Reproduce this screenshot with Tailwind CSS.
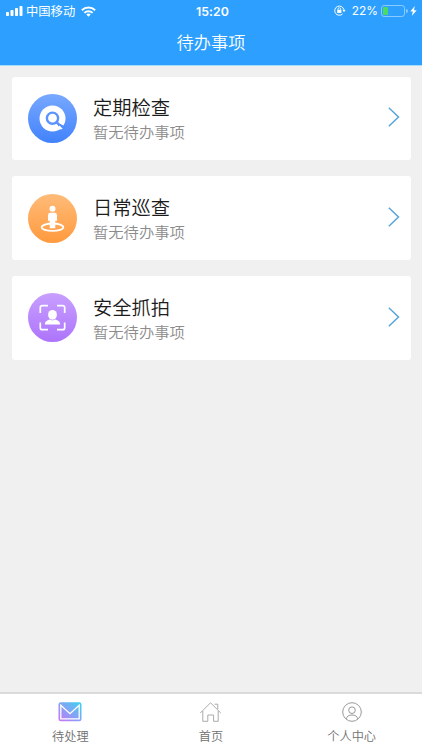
<!DOCTYPE html>
<html lang="zh-Hans">
<head>
    <meta charset="UTF-8">
    <meta name="viewport" content="width=device-width, initial-scale=1.0">
    <title>待办事项</title>
    <script src="https://cdn.jsdelivr.net/npm/@tailwindcss/browser@4"></script>
</head>
<body class="h-[750px] flex flex-col overflow-hidden bg-[#f0f0f0] font-['Inter','Noto_Sans_CJK_SC',sans-serif]">
    <!-- 顶部 -->
    <header class="h-[66px] shrink-0 bg-[#2c9fff] border-b border-[#a5dcfc] text-white">
        <div class="h-[22px] grid grid-cols-[1fr_auto_1fr] items-center pl-[6px] pr-[5px] text-[12.3px] leading-[21px]">
            <div class="flex items-center">
                <svg class="w-[17px] h-[10px]" viewBox="0 0 17 10" fill="currentColor">
                    <rect x="0" y="6" width="3" height="4" rx=".8"/>
                    <rect x="4.5" y="4" width="3" height="6" rx=".8"/>
                    <rect x="9" y="2" width="3" height="8" rx=".8"/>
                    <rect x="13.5" y="0" width="3" height="10" rx=".8"/>
                </svg>
                <span class="ml-[3px] pt-px">中国移动</span>
                <svg class="ml-[6px] w-[15px] h-[11px]" viewBox="0 0 15 11" fill="none" stroke="currentColor" stroke-width="2">
                    <path d="M.9 4.2a9.4 9.4 0 0 1 13.2 0M3.4 6.9a5.8 5.8 0 0 1 8.2 0"/>
                    <path d="M7.5 10.8 5.3 8.6a3.1 3.1 0 0 1 4.4 0z" fill="currentColor" stroke="none"/>
                </svg>
            </div>
            <span class="pl-[2px] text-[12.3px] font-semibold tracking-[0.1px]">15:20</span>
            <div class="flex items-center justify-end pb-px">
                <svg class="w-[12px] h-[11px]" viewBox="0 0 12 11" fill="none" stroke="currentColor">
                    <path d="M8.6 8.9A4.6 4.6 0 1 1 9.8 4.6"/>
                    <path d="M8.4 4.8h3.2L10 7.2z" fill="currentColor" stroke="none"/>
                    <rect x="3.2" y="4.8" width="4.2" height="3.2" fill="currentColor" stroke="none"/>
                    <path d="M4 5V4a1.3 1.3 0 0 1 2.6 0v1" stroke-width=".8"/>
                </svg>
                <span class="ml-[6px] text-[11.9px]">22%</span>
                <svg class="ml-[3px] w-[27px] h-[12px]" viewBox="0 0 27 12">
                    <rect x=".5" y=".5" width="23" height="11" rx="2.6" fill="none" stroke="#8accff"/>
                    <rect x="2" y="2" width="5" height="8" rx="1" fill="#4cd964"/>
                    <path d="M25 4a2 2 0 0 1 0 4z" fill="#8accff"/>
                </svg>
                <svg class="ml-[2px] w-[7px] h-[10px]" viewBox="0 0 7 10" fill="currentColor"><path d="M4.8 0 .3 5.6h2.6L1.8 10l4.9-5.7H4z"/></svg>
            </div>
        </div>
        <h1 class="text-center text-[17.2px] leading-[42px] font-[350]">待办事项</h1>
    </header>

    <!-- 待办列表 -->
    <main class="flex-1 flex flex-col gap-4 pt-[10.5px] px-[11.5px]">
        <a href="#" class="h-[83.7px] flex items-center bg-white rounded-[3px] pl-4 pr-[11px]">
            <svg class="w-[49px] h-[49px] shrink-0" viewBox="0 0 49 49" fill="none">
                <defs><linearGradient id="blue" x1="0" y1="0" x2="0" y2="1"><stop stop-color="#78a8ff"/><stop offset="1" stop-color="#4182fc"/></linearGradient></defs>
                <circle cx="24.5" cy="24.5" r="24.5" fill="url(#blue)"/>
                <circle cx="24.5" cy="24.5" r="13" fill="#fff"/>
                <circle cx="24.5" cy="24.2" r="5.6" stroke="#5b94fd" stroke-width="2.4"/>
                <path d="m28.5 28.200 3.500 3.500" stroke="#5b94fd" stroke-width="2.6"/>
                <path d="m30 31.500 2.500-1.500 5.500 3-4 4z" fill="#4f8cfd"/>
                <path d="m29.800 33.300 1.700-1.700 3.200 3.200-2 .6z" fill="#fff"/>
            </svg>
            <div class="ml-[16.5px] pt-[4px] flex-1">
                <h2 class="text-[19.3px] leading-[26px] text-[#1c1c1c] font-[350]">定期检查</h2>
                <p class="text-[15.3px] leading-[24px] text-[#8c8c8c] font-[350]">暂无待办事项</p>
            </div>
            <svg class="mb-[2px] w-[12px] h-[20px]" viewBox="0 0 12 20" fill="none" stroke="#58a5d6" stroke-width="1.5"><path d="m.8.8 9.7 9.2L.8 19.2"/></svg>
        </a>
        <a href="#" class="h-[83.7px] flex items-center bg-white rounded-[3px] pl-4 pr-[11px]">
            <svg class="w-[49px] h-[49px] shrink-0" viewBox="0 0 49 49" fill="none">
                <defs><linearGradient id="orange" x1="0" y1="0" x2="0" y2="1"><stop stop-color="#ffbb78"/><stop offset="1" stop-color="#ff9a3e"/></linearGradient></defs>
                <circle cx="24.5" cy="24.5" r="24.5" fill="url(#orange)"/>
                <ellipse cx="24.5" cy="33.2" rx="10.8" ry="3.7" stroke="#fff" stroke-width="1.8"/>
                <path d="M20 21.2a2.4 2.4 0 0 1 2.4-2.4h4.2a2.4 2.4 0 0 1 2.4 2.4v5.6h-1.7v7.4h-5.6v-7.4H20z" fill="#fff"/>
                <circle cx="24.5" cy="14.8" r="3" fill="#fff"/>
            </svg>
            <div class="ml-[16.5px] pt-[4px] flex-1">
                <h2 class="text-[19.3px] leading-[26px] text-[#1c1c1c] font-[350]">日常巡查</h2>
                <p class="text-[15.3px] leading-[24px] text-[#8c8c8c] font-[350]">暂无待办事项</p>
            </div>
            <svg class="mb-[2px] w-[12px] h-[20px]" viewBox="0 0 12 20" fill="none" stroke="#58a5d6" stroke-width="1.5"><path d="m.8.8 9.7 9.2L.8 19.2"/></svg>
        </a>
        <a href="#" class="h-[83.7px] flex items-center bg-white rounded-[3px] pl-4 pr-[11px]">
            <svg class="w-[49px] h-[49px] shrink-0" viewBox="0 0 49 49" fill="none">
                <defs><linearGradient id="purple" x1="0" y1="0" x2="0" y2="1"><stop stop-color="#c89fff"/><stop offset="1" stop-color="#ad74fb"/></linearGradient></defs>
                <circle cx="24.5" cy="24.5" r="24.5" fill="url(#purple)"/>
                <path d="M12.3 20v-5.4a2 2 0 0 1 2-2H20M29 12.6h5.7a2 2 0 0 1 2 2V20M36.7 29.5v5.2a2 2 0 0 1-2 2H29M20 36.7h-5.7a2 2 0 0 1-2-2v-5.2" stroke="#fff" stroke-width="1.7"/>
                <path d="M16.8 31.5c.2-3.3 2-4.2 5.2-5.1l2.5 1.1 2.5-1.1c3.2.9 5 1.8 5.2 5.1z" fill="#fff"/>
                <ellipse cx="24.5" cy="21.8" rx="4.4" ry="4.9" fill="#fff"/>
            </svg>
            <div class="ml-[16.5px] pt-[4px] flex-1">
                <h2 class="text-[19.3px] leading-[26px] text-[#1c1c1c] font-[350]">安全抓拍</h2>
                <p class="text-[15.3px] leading-[24px] text-[#8c8c8c] font-[350]">暂无待办事项</p>
            </div>
            <svg class="mb-[2px] w-[12px] h-[20px]" viewBox="0 0 12 20" fill="none" stroke="#58a5d6" stroke-width="1.5"><path d="m.8.8 9.7 9.2L.8 19.2"/></svg>
        </a>
    </main>

    <!-- 底部导航 -->
    <nav class="h-[58px] shrink-0 grid grid-cols-3 bg-white border-t-2 border-[#dadada] text-[12.2px] leading-[18px] text-[#707070] font-[350]">
        <a href="#" class="flex flex-col items-center pt-[8px]">
            <svg class="w-[24px] h-[20px]" viewBox="0 0 24 20" fill="none">
                <defs><linearGradient id="mail" x1="0" y1="1" x2="1" y2="0"><stop offset=".1" stop-color="#bd7cf8"/><stop offset=".55" stop-color="#7da8f5"/><stop offset="1" stop-color="#38d5ee"/></linearGradient></defs>
                <rect x=".5" y=".3" width="23" height="19" rx="2.3" fill="url(#mail)"/>
                <path d="M2.8 3.2v13.6h18.4V3.2L12 11.7z" stroke="#fff" stroke-width="1.3"/>
            </svg>
            <span class="mt-[6px]">待处理</span>
        </a>
        <a href="#" class="flex flex-col items-center pt-[8px]">
            <svg class="w-[24px] h-[20px]" viewBox="0 0 24 20" fill="none" stroke="#aaa">
                <path d="M1.3 11 11.5.8 21.8 11M3.8 9v10.3h5V13h5.8v6.3h4.6V9M15.5 2.2h3.3v4.9"/>
            </svg>
            <span class="mt-[6px]">首页</span>
        </a>
        <a href="#" class="flex flex-col items-center pt-[8px]">
            <svg class="w-[20px] h-[20px]" viewBox="0 0 20 20" fill="none" stroke="#999">
                <circle cx="10" cy="10" r="9.3"/>
                <circle cx="10" cy="8.2" r="3.3"/>
                <path d="M4.2 17c.4-2.7 2.8-4 5.8-4s5.4 1.3 5.8 4"/>
            </svg>
            <span class="mt-[6px]">个人中心</span>
        </a>
    </nav>
</body>
</html>
